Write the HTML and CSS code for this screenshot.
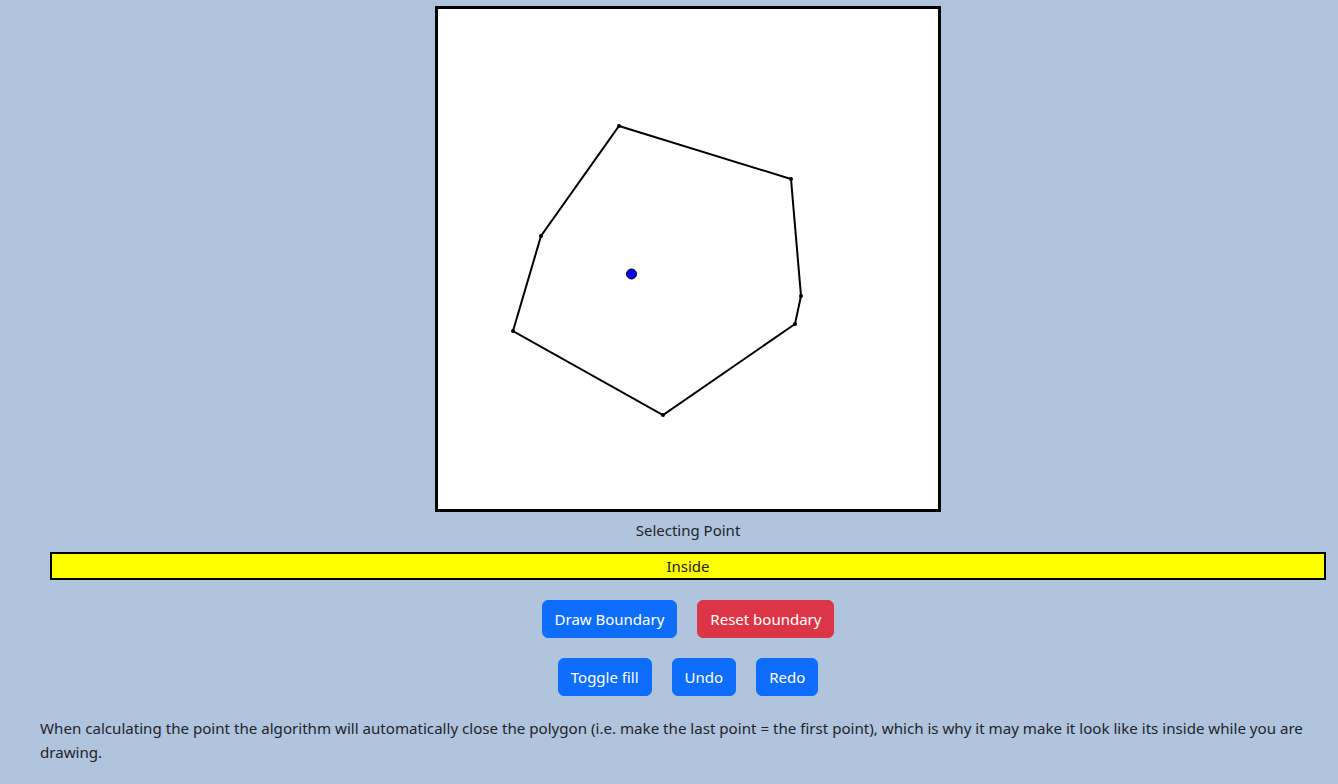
FILE: index.html
```html
<!DOCTYPE html>
<html lang="en">
<head>
<meta charset="utf-8">
<title>Point in Polygon</title>
<link rel="stylesheet" href="styles.css">
</head>
<body>
<div class="main">
  <div class="canvas">
    <svg width="500" height="500" viewBox="0 0 500 500">
      <polygon points="181,117 353,170 363,287 357,315 225,406 75,322 103,227" fill="none" stroke="#000" stroke-width="2" stroke-linejoin="miter"/>
      <g fill="#000">
        <circle cx="181" cy="117" r="2"/>
        <circle cx="353" cy="170" r="2"/>
        <circle cx="363" cy="287" r="2"/>
        <circle cx="357" cy="315" r="2"/>
        <circle cx="225" cy="406" r="2"/>
        <circle cx="75" cy="322" r="2"/>
        <circle cx="103" cy="227" r="2"/>
      </g>
      <circle cx="193.5" cy="265" r="5" fill="#0000ff" stroke="#000" stroke-width="1"/>
    </svg>
  </div>
  <div class="mode">Selecting Point</div>
  <div class="status">Inside</div>
  <div class="btn-row">
    <button class="btn btn-primary">Draw Boundary</button>
    <button class="btn btn-danger">Reset boundary</button>
  </div>
  <div class="btn-row">
    <button class="btn btn-primary">Toggle fill</button>
    <button class="btn btn-primary">Undo</button>
    <button class="btn btn-primary">Redo</button>
  </div>
</div>
<p class="note">When calculating the point the algorithm will automatically close the polygon (i.e. make the last point = the first point), which is why it may make it look like its inside while you are drawing.</p>
</body>
</html>
```

FILE: styles.css
```css
html, body {
  margin: 0;
  padding: 0;
}
body {
  background: #b0c4de;
  color: #212529;
  font-family: "Noto Sans", "Open Sans", sans-serif;
  font-size: 15px;
  line-height: 24px;
}
.main {
  margin: 0 12px 0 50px;
  padding-top: 6px;
  display: flex;
  flex-direction: column;
  align-items: center;
}
.canvas {
  width: 500px;
  height: 500px;
  border: 3px solid #000;
  background: #fff;
}
.canvas svg {
  display: block;
}
.mode {
  margin-top: 6px;
  text-align: center;
}
.status {
  align-self: stretch;
  margin-top: 10px;
  height: 24px;
  border: 2px solid #000;
  background: #ffff00;
  text-align: center;
}
.btn-row {
  display: flex;
  gap: 20px;
  margin-top: 20px;
}
.btn {
  font-family: inherit;
  font-size: 15px;
  line-height: 24px;
  padding: 6px 12px;
  border: 1px solid transparent;
  border-radius: 6px;
  color: #fff;
  cursor: pointer;
}
.btn-primary {
  background: #0d6efd;
  border-color: #0d6efd;
}
.btn-danger {
  background: #dc3545;
  border-color: #dc3545;
}
.note {
  margin: 20px 0 0 0;
  padding: 0 28px 0 40px;
  font-size: 15.12px;
}
```
